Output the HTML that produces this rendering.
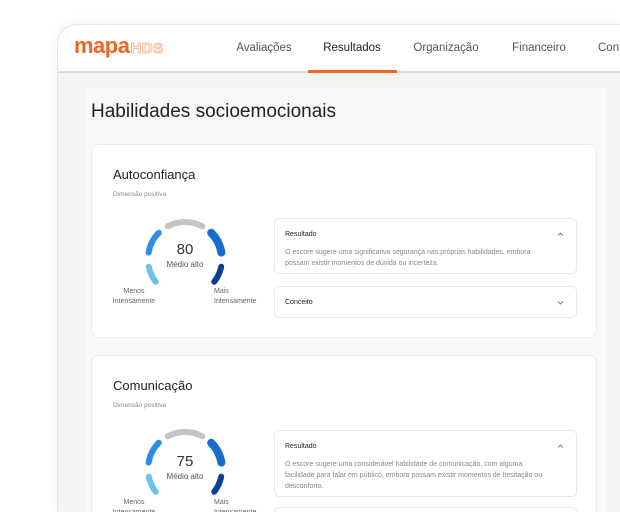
<!DOCTYPE html>
<html><head><meta charset="utf-8"><style>
*{margin:0;padding:0;box-sizing:border-box}
html,body{width:620px;height:512px;overflow:hidden}
body{background:#fff;font-family:"Liberation Sans",sans-serif;position:relative}
.win{position:absolute;left:57px;top:24px;width:563px;height:488px;border-radius:20px 0 0 0;background:#f3f4f4;box-shadow:0 0 12px rgba(0,0,0,.06);overflow:hidden;border:1px solid #e6e6e6;border-right:0;border-bottom:0}
.hdr{position:absolute;left:0;top:0;right:0;height:48px;background:#fff;border-bottom:2px solid #dcdcdc}
.logo{position:absolute;left:16px;top:8px;font-size:22px;font-weight:bold;color:#f26522;letter-spacing:-0.5px}
.logo span{font-size:15px;font-weight:bold;color:#fff;-webkit-text-stroke:0.8px #f6a07a;letter-spacing:0.5px;margin-left:1px}
.nav{position:absolute;top:17px;font-size:11.5px;color:#555;transform:translateX(-50%);white-space:nowrap}
.ul{position:absolute;left:250px;top:45px;width:89px;height:3px;background:#f26522}
.panel{position:absolute;left:27px;top:62px;width:522px;height:500px;background:#f7f8f8}
h1{position:absolute;left:91px;top:101px;font-size:19px;font-weight:normal;color:#222}
.clip{position:absolute;left:0;top:0;width:620px;height:512px;overflow:hidden}
.card{position:absolute;left:91px;width:506px;background:#fff;border:1px solid #ececec;border-radius:8px}
.t{position:absolute;left:21px;font-size:13px;color:#222}
.s{position:absolute;left:21px;font-size:6.5px;color:#888}
.box{position:absolute;left:182px;width:303px;border:1px solid #e8e8e8;border-radius:5px;background:#fff}
.bt{position:absolute;left:10px;font-size:7px;color:#222}
.bp{position:absolute;left:10px;top:28px;width:262px;font-size:7px;line-height:11px;color:#888}
.chev{position:absolute;right:12px;width:7px;height:7px}
.g{position:absolute;left:0;top:0}
.num{position:absolute;left:93px;width:0;text-align:center;font-size:15px;color:#333}
.num div{width:60px;margin-left:-30px;text-align:center}
.lab{position:absolute;font-size:7px;color:#666;text-align:center;line-height:10px;width:60px}
</style></head><body>
<div class="clip">
<div class="win">
<div class="hdr">
<div class="logo">mapa<span>HDS</span></div>
<div class="nav" style="left:206px">Avaliações</div>
<div class="nav" style="left:294px;color:#222">Resultados</div>
<div class="nav" style="left:388px">Organização</div>
<div class="nav" style="left:481px">Financeiro</div>
<div class="nav" style="left:540px;transform:none">Configurações</div>
<div class="ul"></div>
</div>
<div class="panel"></div>
</div>
<h1>Habilidades socioemocionais</h1>

<div class="card" style="top:144px;height:194px">
<div class="t" style="top:22px">Autoconfiança</div>
<div class="s" style="top:46px">Dimensão positiva</div>
<svg class="g" width="200" height="194" viewBox="91 144 200 194" fill="none" stroke-linecap="round">
<path d="M166.6 225.3 A37 37 0 0 1 201.4 225.3" stroke="#c4c4c4" stroke-width="6"/>
<path d="M147.6 251.6 A37 37 0 0 1 157.8 231.8" stroke="#2f8de4" stroke-width="6"/>
<path d="M154.8 280.8 A37 37 0 0 1 147.8 265.7" stroke="#6cc0ec" stroke-width="6"/>
<path d="M210.2 231.8 A37 37 0 0 1 220.4 251.6" stroke="#176ecb" stroke-width="8"/>
<path d="M220.2 265.7 A37 37 0 0 1 213.2 280.8" stroke="#0a3f94" stroke-width="6"/>
</svg>
<div class="num" style="top:96px"><div>80</div><div style="font-size:8px;color:#555;margin-top:2px">Médio alto</div></div>
<div class="lab" style="left:12px;top:142px">Menos<br>Intensamente</div>
<div class="lab" style="left:122px;top:142px;text-align:left">Mais<br>Intensamente</div>
<div class="box" style="top:73px;height:56px"><div class="bt" style="top:12px">Resultado</div><svg class="chev" style="top:12px" viewBox="0 0 7 7"><path d="M1 4.5L3.5 2L6 4.5" stroke="#777" fill="none" stroke-width="0.9"/></svg><div class="bp">O escore sugere uma significativa segurança nas próprias habilidades, embora possam existir momentos de dúvida ou incerteza.</div></div>
<div class="box" style="top:141px;height:32px"><div class="bt" style="top:12px">Conceito</div><svg class="chev" style="top:12px" viewBox="0 0 7 7"><path d="M1 2.5L3.5 5L6 2.5" stroke="#777" fill="none" stroke-width="0.9"/></svg></div>
</div>

<div class="card" style="top:355px;height:200px">
<div class="t" style="top:22px">Comunicação</div>
<div class="s" style="top:46px">Dimensão positiva</div>
<svg class="g" width="200" height="200" viewBox="91 145 200 200" fill="none" stroke-linecap="round">
<path d="M166.6 225.3 A37 37 0 0 1 201.4 225.3" stroke="#c4c4c4" stroke-width="6"/>
<path d="M147.6 251.6 A37 37 0 0 1 157.8 231.8" stroke="#2f8de4" stroke-width="6"/>
<path d="M154.8 280.8 A37 37 0 0 1 147.8 265.7" stroke="#6cc0ec" stroke-width="6"/>
<path d="M210.2 231.8 A37 37 0 0 1 220.4 251.6" stroke="#176ecb" stroke-width="8"/>
<path d="M220.2 265.7 A37 37 0 0 1 213.2 280.8" stroke="#0a3f94" stroke-width="6"/>
</svg>
<div class="num" style="top:97px"><div>75</div><div style="font-size:8px;color:#555;margin-top:2px">Médio alto</div></div>
<div class="lab" style="left:12px;top:142px">Menos<br>Intensamente</div>
<div class="lab" style="left:122px;top:142px;text-align:left">Mais<br>Intensamente</div>
<div class="box" style="top:74px;height:67px"><div class="bt" style="top:12px">Resultado</div><svg class="chev" style="top:12px" viewBox="0 0 7 7"><path d="M1 4.5L3.5 2L6 4.5" stroke="#777" fill="none" stroke-width="0.9"/></svg><div class="bp">O escore sugere uma considerável habilidade de comunicação, com alguma facilidade para falar em público, embora possam existir momentos de hesitação ou desconforto.</div></div>
<div class="box" style="top:151px;height:32px"></div>
</div>
</div>
</body></html>
